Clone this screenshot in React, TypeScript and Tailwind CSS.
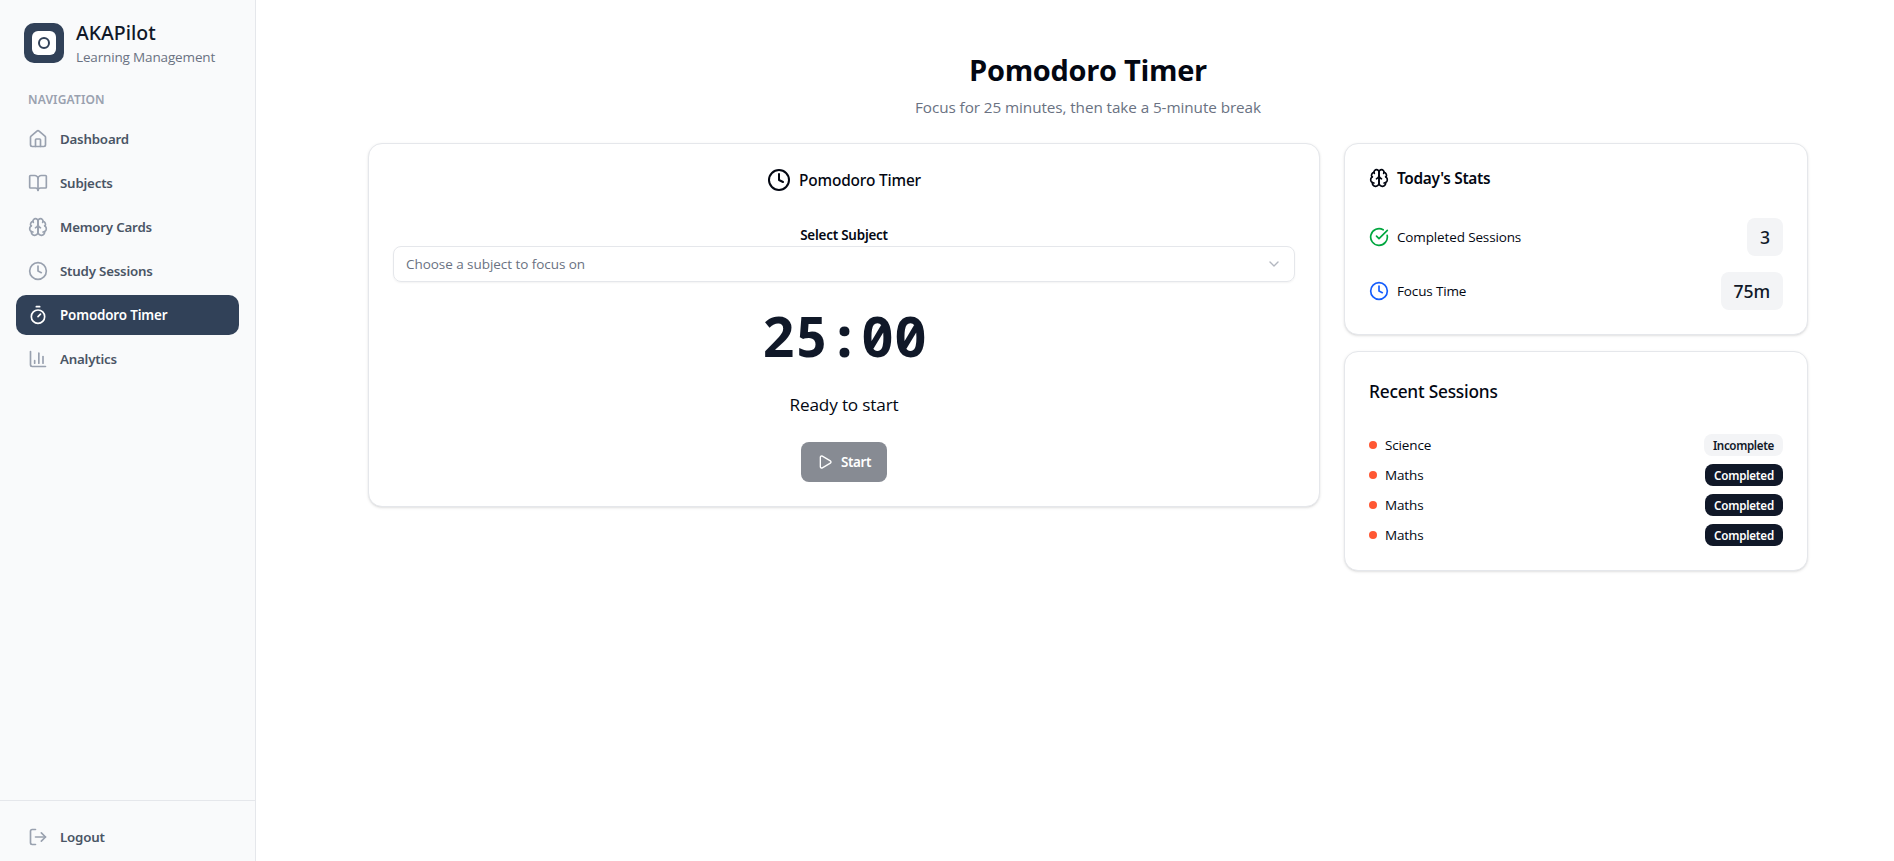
import { BookOpen, ChevronDown, Clock, House, Play, Timer, type LucideIcon } from "lucide-react";

function AnalyticsIcon({ className }: { className?: string }) {
  return (
    <svg viewBox="0 0 24 24" fill="none" stroke="currentColor" strokeWidth={2} strokeLinecap="round" strokeLinejoin="round" className={className}>
      <path d="M3 3v16a2 2 0 0 0 2 2h16" />
      <path d="M18 17V9" />
      <path d="M13 17V5" />
      <path d="M8 17v-3" />
    </svg>
  );
}

function LogoutIcon({ className }: { className?: string }) {
  return (
    <svg viewBox="0 0 24 24" fill="none" stroke="currentColor" strokeWidth={2} strokeLinecap="round" strokeLinejoin="round" className={className}>
      <path d="M9 21H5a2 2 0 0 1-2-2V5a2 2 0 0 1 2-2h4" />
      <path d="m16 17 5-5-5-5" />
      <path d="M21 12H9" />
    </svg>
  );
}

function BrainIcon({ className }: { className?: string }) {
  return (
    <svg viewBox="0 0 24 24" fill="none" stroke="currentColor" strokeWidth={2} strokeLinecap="round" strokeLinejoin="round" className={className}>
      <path d="M12 5a3 3 0 1 0-5.997.125 4 4 0 0 0-2.526 5.77 4 4 0 0 0 .556 6.588A4 4 0 1 0 12 18Z" />
      <path d="M12 5a3 3 0 1 1 5.997.125 4 4 0 0 1 2.526 5.77 4 4 0 0 1-.556 6.588A4 4 0 1 1 12 18Z" />
      <path d="M15 13a4.5 4.5 0 0 1-3-4 4.5 4.5 0 0 1-3 4" />
      <path d="M17.599 6.5a3 3 0 0 0 .399-1.375" />
      <path d="M6.003 5.125A3 3 0 0 0 6.401 6.5" />
      <path d="M3.477 10.896a4 4 0 0 1 .585-.396" />
      <path d="M19.938 10.5a4 4 0 0 1 .585.396" />
      <path d="M6 18a4 4 0 0 1-1.967-.516" />
      <path d="M19.967 17.484A4 4 0 0 1 18 18" />
    </svg>
  );
}

function CheckCircleIcon({ className }: { className?: string }) {
  return (
    <svg viewBox="0 0 24 24" fill="none" stroke="currentColor" strokeWidth={2} strokeLinecap="round" strokeLinejoin="round" className={className}>
      <path d="M21.801 10A10 10 0 1 1 17 3.335" />
      <path d="m9 11 3 3L22 4" />
    </svg>
  );
}

type IconType = LucideIcon | ((p: { className?: string }) => React.ReactElement);

const navItems: { label: string; icon: IconType; active?: boolean }[] = [
  { label: "Dashboard", icon: House },
  { label: "Subjects", icon: BookOpen },
  { label: "Memory Cards", icon: BrainIcon },
  { label: "Study Sessions", icon: Clock },
  { label: "Pomodoro Timer", icon: Timer, active: true },
  { label: "Analytics", icon: AnalyticsIcon },
];

const sessions = [
  { subject: "Science", done: false },
  { subject: "Maths", done: true },
  { subject: "Maths", done: true },
  { subject: "Maths", done: true },
];

function NavItem({ label, icon: Icon, active }: { label: string; icon: IconType; active?: boolean }) {
  return (
    <a
      className={
        active
          ? "flex h-10 items-center gap-3 rounded-[10px] bg-[#314158] px-3 font-['Noto_Sans',sans-serif] text-[13.4px] font-semibold tracking-[-0.15px] text-white"
          : "flex h-10 items-center gap-3 rounded-[10px] px-3 font-['Noto_Sans',sans-serif] text-[13.3px] font-semibold tracking-[-0.2px] text-[#4a5565]"
      }
    >
      <Icon className={active ? "size-5" : "size-5 text-[#99a1af]"} />
      <span className="pt-px">{label}</span>
    </a>
  );
}

function Sidebar() {
  return (
    <aside className="flex h-full w-64 shrink-0 flex-col border-r border-gray-200 bg-gray-50">
      <div className="flex h-[86px] items-center gap-3 px-6">
        <div className="flex size-10 items-center justify-center rounded-[10px] bg-[#314158]">
          <div className="flex size-6 items-center justify-center rounded-md bg-white">
            <div className="size-3 rounded-full border-2 border-[#314158]" />
          </div>
        </div>
        <div>
          <div className="font-['Noto_Sans',sans-serif] text-[19.5px] leading-7 font-medium text-[#101828]">AKAPilot</div>
          <div className="text-[13.5px] leading-5 tracking-[-0.15px] text-[#6a7282]">Learning Management</div>
        </div>
      </div>
      <div className="flex h-[27px] items-center px-7 font-['Noto_Sans',sans-serif] text-[12px] font-semibold tracking-[0.15px] text-[#99a1af]">
        NAVIGATION
      </div>
      <nav className="mt-1.5 flex flex-1 flex-col gap-1 px-4">
        {navItems.map((item) => (
          <NavItem key={item.label} {...item} />
        ))}
      </nav>
      <div className="border-t border-gray-200 px-4 pt-4 pb-1">
        <NavItem label="Logout" icon={LogoutIcon} />
      </div>
    </aside>
  );
}

function TimerCard() {
  return (
    <section className="col-span-2 flex flex-col items-center self-start rounded-[14px] border border-gray-200 bg-white p-6 shadow-sm">
      <div className="flex h-6 items-center gap-2 font-['Noto_Sans',sans-serif] text-[15.4px] font-medium tracking-[-0.15px]">
        <Clock className="size-6" />
        <span className="pt-0.5">Pomodoro Timer</span>
      </div>
      <div className="mt-8 flex h-[22px] items-center pt-px font-['Noto_Sans',sans-serif] text-[13.4px] font-semibold tracking-[-0.2px]">
        Select Subject
      </div>
      <button className="flex h-9 w-full items-center justify-between rounded-lg border border-gray-200 px-3 text-[13.5px] tracking-[-0.05px] text-[#6a7282] shadow-xs">
        <span className="pt-px">Choose a subject to focus on</span>
        <ChevronDown className="size-4 opacity-50" />
      </button>
      <div className="mt-6 flex h-[60px] items-center pb-0.5 pl-px font-['Noto_Sans_Mono',monospace] text-[55px] leading-none font-bold text-[#101828] slashed-zero">
        25:00
      </div>
      <div className="mt-6 flex h-7 items-center pt-px text-[17.2px] tracking-[-0.17px]">Ready to start</div>
      <button className="mt-6 flex h-10 items-center gap-2 rounded-lg bg-[#878b93] px-4 font-['Noto_Sans',sans-serif] text-[13.4px] font-semibold tracking-[-0.35px] text-white">
        <Play className="size-4" />
        <span className="pt-px">Start</span>
      </button>
    </section>
  );
}

function StatRow({ icon, label, value }: { icon: React.ReactNode; label: string; value: string }) {
  return (
    <div className="flex items-center justify-between">
      <div className="flex items-center gap-2 text-[13.5px] tracking-[-0.14px]">
        {icon}
        <span className="pt-px">{label}</span>
      </div>
      <div className="flex h-[38px] items-center rounded-lg bg-gray-100 px-[13px] pt-px font-['Noto_Sans',sans-serif] text-[17.6px] font-medium tracking-[-0.1px] text-[#101828]">
        {value}
      </div>
    </div>
  );
}

function StatsCard() {
  return (
    <section className="rounded-[14px] border border-gray-200 bg-white p-6 shadow-sm">
      <div className="flex h-5 items-center gap-2 font-['Noto_Sans',sans-serif] text-[15.4px] font-semibold tracking-[-0.32px]">
        <BrainIcon className="size-5" />
        <span className="pt-0.5">Today's Stats</span>
      </div>
      <div className="mt-[30px] flex flex-col gap-4">
        <StatRow icon={<CheckCircleIcon className="size-5 text-green-600" />} label="Completed Sessions" value="3" />
        <StatRow icon={<Clock className="size-5 text-blue-600" />} label="Focus Time" value="75m" />
      </div>
    </section>
  );
}

function RecentCard() {
  return (
    <section className="rounded-[14px] border border-gray-200 bg-white p-6 shadow-sm">
      <div className="flex h-7 items-center pt-[3px] font-['Noto_Sans',sans-serif] text-[17.3px] font-medium tracking-[-0.22px]">
        Recent Sessions
      </div>
      <div className="mt-[30px] flex flex-col gap-2">
        {sessions.map((s, i) => (
          <div key={i} className="flex h-[22px] items-center justify-between">
            <div className="flex items-center gap-2 text-[13.5px] tracking-[-0.15px]">
              <span className="size-2 rounded-full bg-[#ff5733]" />
              <span className="pt-px">{s.subject}</span>
            </div>
            {s.done ? (
              <span className="flex h-[22px] items-center rounded-lg bg-[#101828] px-[9px] pt-px font-['Noto_Sans',sans-serif] text-[11.6px] font-semibold tracking-[-0.2px] text-white">
                Completed
              </span>
            ) : (
              <span className="flex h-[22px] items-center rounded-lg bg-gray-100 px-[9px] pt-px font-['Noto_Sans',sans-serif] text-[11.6px] font-semibold tracking-[-0.35px] text-[#101828]">
                Incomplete
              </span>
            )}
          </div>
        ))}
      </div>
    </section>
  );
}

export default function App() {
  return (
    <div className="flex h-screen overflow-hidden bg-white font-['Open_Sans','Noto_Sans',sans-serif] text-[#030712]">
      <Sidebar />
      <main className="flex flex-1 justify-center pl-[26px]">
        <div className="w-[1440px]">
          <header className="flex flex-col items-center pt-[52px]">
            <h1 className="text-[29px] leading-9 font-bold tracking-[-0.3px]">Pomodoro Timer</h1>
            <p className="mt-[7px] text-[15.3px] leading-6 tracking-[-0.09px] text-[#6a7282]">
              Focus for 25 minutes, then take a 5-minute break
            </p>
          </header>
          <div className="mt-6 grid grid-cols-3 gap-6">
            <TimerCard />
            <div className="flex flex-col gap-4">
              <StatsCard />
              <RecentCard />
            </div>
          </div>
        </div>
      </main>
    </div>
  );
}
